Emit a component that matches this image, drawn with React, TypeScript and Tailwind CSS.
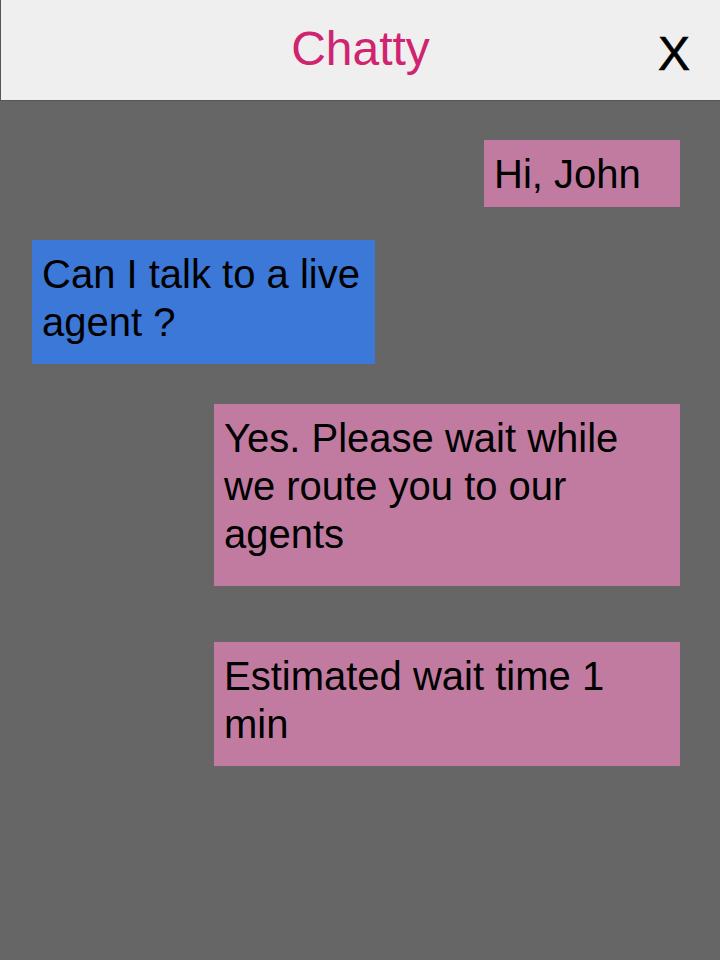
import React from "react";

type Msg = {
  text: string;
  fromAgent: boolean;
  box: string;
};

const messages: Msg[] = [
  { text: "Hi, John", fromAgent: true, box: "mt-[39px] w-[196px] h-[67px]" },
  {
    text: "Can I talk to a live agent ?",
    fromAgent: false,
    box: "mt-[33px] w-[343px] h-[124px]",
  },
  {
    text: "Yes. Please wait while we route you to our agents",
    fromAgent: true,
    box: "mt-[40px] w-[466px] h-[182px]",
  },
  {
    text: "Estimated wait time 1 min",
    fromAgent: true,
    box: "mt-[56px] w-[466px] h-[124px]",
  },
];

const App: React.FC = () => {
  return (
    <div
      className="min-h-screen w-[720px] bg-[#666666] flex flex-col"
      style={{ fontFamily: '"Liberation Sans", Arial, sans-serif' }}
    >
      {/* Header */}
      <header className="h-[101px] bg-[#efefef] border-l border-b border-[#555555] grid grid-cols-[1fr_auto_1fr] items-start">
        <div />
        <h1 className="pt-[25px] text-[48px] leading-[48px] text-[#d02370]">
          Chatty
        </h1>
        <div className="flex justify-end pr-[30px] pt-[30px]">
          <button className="text-[48px] leading-[48px] text-black [-webkit-text-stroke:0.6px_black]">
            X
          </button>
        </div>
      </header>

      {/* Conversation */}
      <div className="flex flex-col">
        {messages.map((m, i) => (
          <div
            key={i}
            className={`${m.box} ${
              m.fromAgent ? "self-end mr-[40px] bg-[#c27ba0]" : "self-start ml-[32px] bg-[#3c78d8]"
            } pl-[10px] pr-[14px] pt-[10px] text-[40px] leading-[48px] text-black`}
          >
            {m.text}
          </div>
        ))}
      </div>
    </div>
  );
};

export default App;
